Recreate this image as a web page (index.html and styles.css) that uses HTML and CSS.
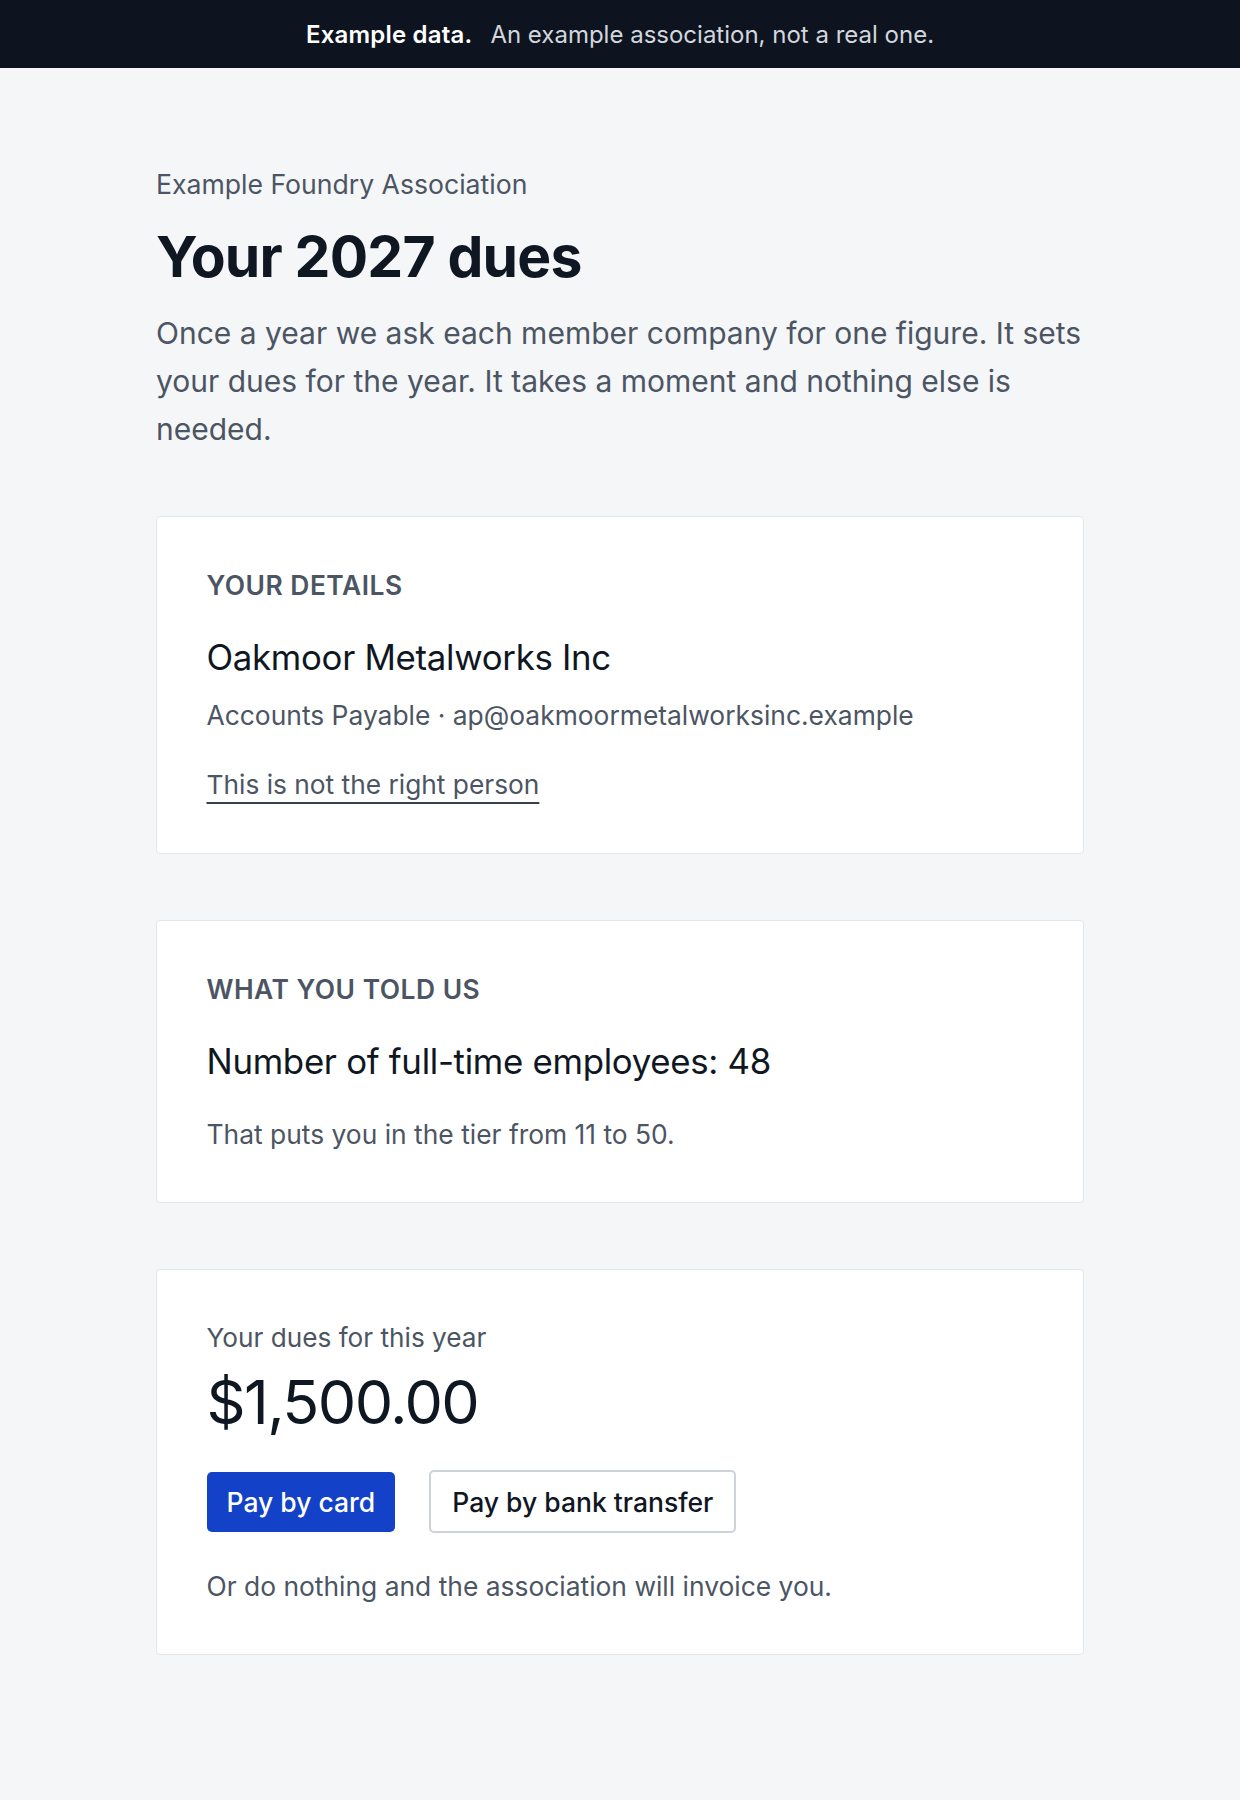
FILE: index.html
```html
<!DOCTYPE html>
<html lang="en">
<head>
<meta charset="utf-8">
<title>Your 2027 dues</title>
<link rel="stylesheet" href="styles.css">
</head>
<body>
<div class="banner"><strong>Example data.</strong><span class="banner-note">An example association, not a real one.</span></div>
<main class="page">
  <p class="org">Example Foundry Association</p>
  <h1 class="title">Your 2027 dues</h1>
  <p class="intro">Once a year we ask each member company for one figure. It sets your dues for the year. It takes a moment and nothing else is needed.</p>

  <div class="cards">
    <section class="card">
      <h2 class="label">Your details</h2>
      <p class="primary">Oakmoor Metalworks Inc</p>
      <p class="muted">Accounts Payable · ap@oakmoormetalworksinc.example</p>
      <a class="link" href="#">This is not the right person</a>
    </section>

    <section class="card">
      <h2 class="label">What you told us</h2>
      <p class="primary">Number of full-time employees: 48</p>
      <p class="muted tier">That puts you in the tier from 11 to 50.</p>
    </section>

    <section class="card">
      <p class="dues-label">Your dues for this year</p>
      <p class="amount">$1,500.00</p>
      <div class="actions">
        <button class="btn btn-primary" type="button">Pay by card</button>
        <button class="btn btn-secondary" type="button">Pay by bank transfer</button>
      </div>
      <p class="muted note">Or do nothing and the association will invoice you.</p>
    </section>
  </div>
</main>
</body>
</html>
```

FILE: styles.css
```css
* { box-sizing: border-box; }

body {
  margin: 0;
  background: #f5f6f8;
  font-family: Inter, "Noto Sans", "Liberation Sans", sans-serif;
  color: #0f1723;
}

.banner {
  display: flex;
  justify-content: center;
  align-items: baseline;
  gap: 18px;
  height: 68px;
  padding: 20px 0 18px;
  background: #0d1420;
  color: #ffffff;
  font-size: 24px;
  line-height: 30px;
}
.banner strong { font-weight: 600; letter-spacing: 0.2px; }
.banner-note { color: #d3d7dd; }

.page {
  max-width: 928px;
  margin: 0 auto;
  padding: 98px 0 120px;
}

.org {
  margin: 0;
  font-size: 26.6px;
  line-height: 36px;
  color: #4b5563;
}

.title {
  margin: 23px 0 0;
  font-size: 57px;
  line-height: 64px;
  font-weight: 700;
  letter-spacing: -0.8px;
  color: #0f1723;
}

.intro {
  margin: 20px -36px 0 0;
  font-size: 30px;
  line-height: 48px;
  color: #4b5563;
}

.cards {
  display: flex;
  flex-direction: column;
  gap: 66px;
  margin-top: 63px;
}

.card {
  background: #ffffff;
  border: 1.5px solid #e3e6ea;
  border-radius: 4px;
  padding: 50px 50px 48px 49.5px;
}

.label {
  margin: 0;
  font-size: 26.4px;
  line-height: 36px;
  font-weight: 600;
  text-transform: uppercase;
  letter-spacing: 0.5px;
  color: #4b5563;
}

.primary {
  margin: 30px 0 0;
  font-size: 34.8px;
  line-height: 48px;
  color: #0f1723;
  letter-spacing: -0.3px;
}

.muted {
  margin: 14px 0 0;
  font-size: 26.4px;
  line-height: 40px;
  color: #4b5563;
}

.tier { margin-top: 29px; }

.link {
  display: inline-block;
  margin-top: 30px;
  font-size: 26.3px;
  line-height: 40px;
  color: #4b5563;
  text-decoration: underline;
  text-decoration-color: #374151;
  text-decoration-thickness: 2px;
  text-underline-offset: 8px;
}

.dues-label {
  margin: 0;
  font-size: 26.2px;
  line-height: 36px;
  color: #4b5563;
}

.amount {
  margin: 10px 0 0;
  font-size: 61px;
  line-height: 72px;
  font-weight: 400;
  letter-spacing: -1.6px;
  color: #0f1723;
}

.actions {
  display: flex;
  align-items: center;
  gap: 34px;
  margin-top: 32px;
}

.btn {
  font-family: inherit;
  font-size: 26.5px;
  font-weight: 500;
  line-height: 36px;
  border-radius: 5px;
  cursor: pointer;
}

.btn-primary {
  height: 60px;
  padding: 0 20px;
  border: none;
  background: #1341c7;
  color: #ffffff;
}

.btn-secondary {
  height: 63px;
  padding: 0 21px;
  border: 2px solid #cdd2db;
  background: #ffffff;
  color: #0f1723;
}

.note { margin-top: 33px; }
```
